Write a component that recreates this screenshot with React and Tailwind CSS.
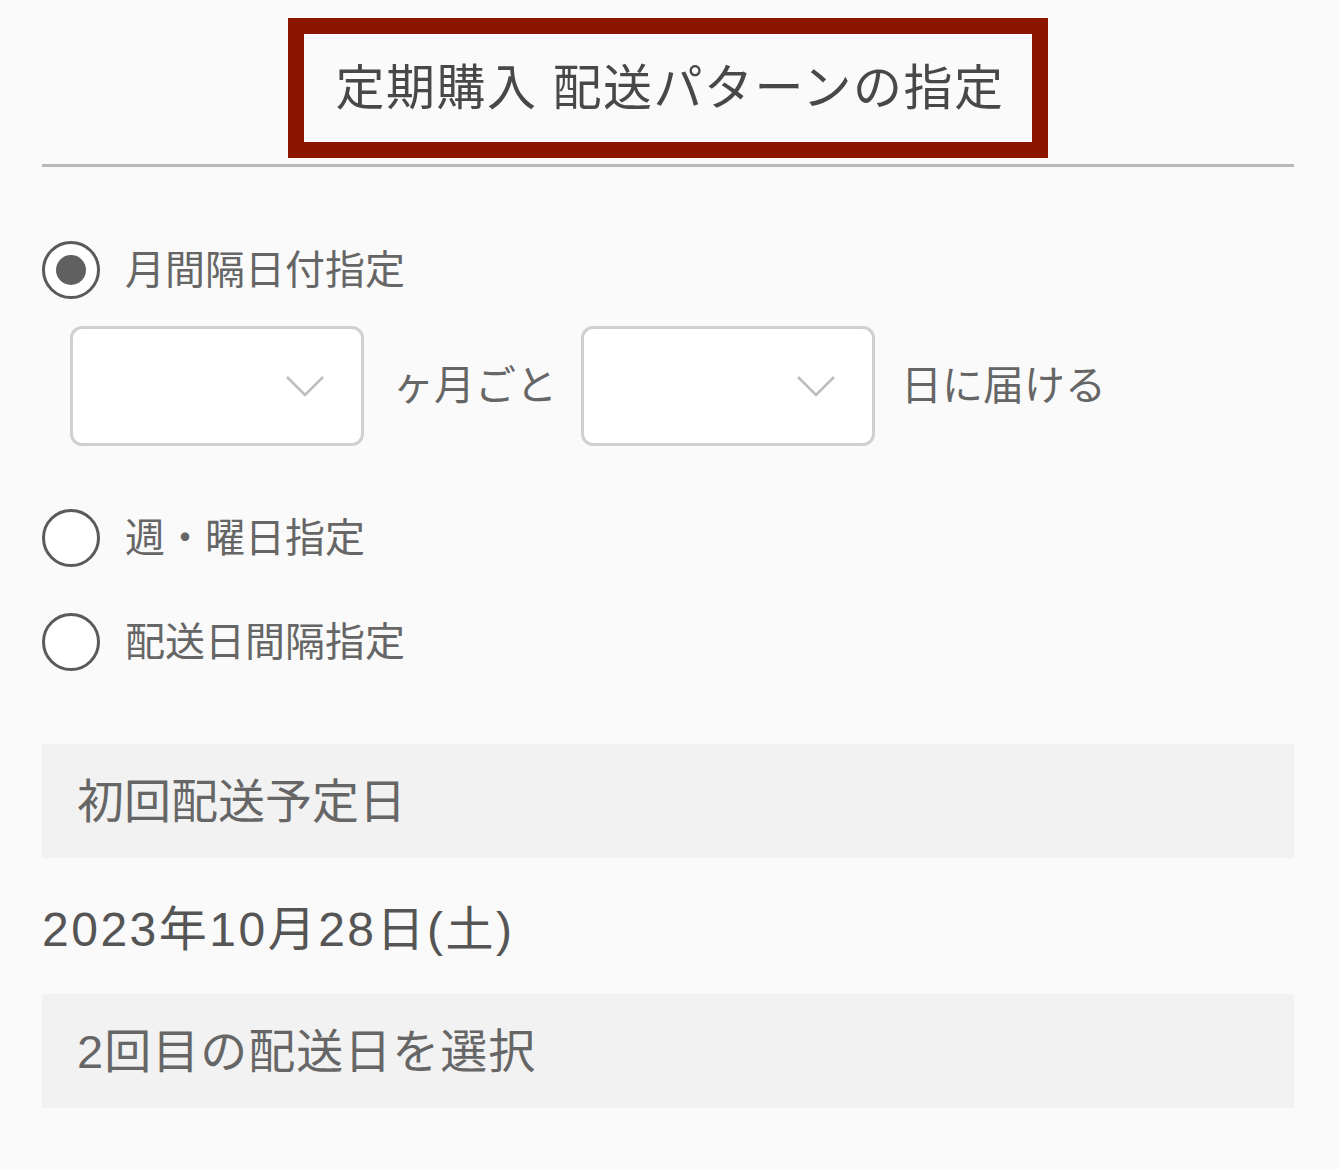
import React from 'react';

const font = { fontFamily: '"Liberation Sans", "Noto Sans CJK JP", sans-serif' };

function Radio({ checked, label }) {
  return (
    <div className="flex items-center h-[58px]">
      <div className="w-[58px] h-[58px] rounded-full border-[3px] border-[#5a5a5a] bg-white flex items-center justify-center shrink-0">
        {checked && <div className="w-[30px] h-[30px] rounded-full bg-[#606060]" />}
      </div>
      <span className="ml-[25px] text-[40px] leading-none text-[#666]">{label}</span>
    </div>
  );
}

function Select() {
  return (
    <div className="w-[294px] h-[120px] rounded-[12px] border-[3px] border-[#d0d0d0] bg-white flex items-center justify-end pr-[36px]">
      <svg width="40" height="24" viewBox="0 0 40 24" fill="none">
        <path d="M2 3 L20 21 L38 3" stroke="#bdbdbd" strokeWidth="2.5" />
      </svg>
    </div>
  );
}

export default function App() {
  return (
    <div className="min-h-[1169px] bg-[#fafafa] pl-[42px] pr-[46px] pt-[18px]" style={font}>
      <div className="mx-auto w-[760px] h-[140px] border-[16px] border-[#8b1500] flex items-center justify-center">
        <h1 className="text-[49px] leading-none text-[#484848] font-normal tracking-[1.5px] pl-[4px]">定期購入 配送パターンの指定</h1>
      </div>
      <div className="mt-[6px] h-[3px] bg-[#b8b8b8]" />

      <div className="mt-[74px]">
        <Radio checked label="月間隔日付指定" />
      </div>
      <div className="mt-[27px] ml-[28px] flex items-center">
        <Select />
        <span className="ml-[29px] mr-[24px] text-[41px] leading-none text-[#666]">ヶ月ごと</span>
        <Select />
        <span className="ml-[26px] text-[41px] leading-none text-[#666]">日に届ける</span>
      </div>

      <div className="mt-[63px]">
        <Radio label="週・曜日指定" />
      </div>
      <div className="mt-[46px]">
        <Radio label="配送日間隔指定" />
      </div>

      <div className="mt-[73px] h-[114px] bg-[#f2f2f2] flex items-center pl-[35px]">
        <span className="text-[47px] leading-none text-[#666]">初回配送予定日</span>
      </div>
      <div className="mt-[42px] h-[94px] flex items-start pt-[6px]">
        <span className="text-[48px] leading-none text-[#555] tracking-[2.5px]">2023年10月28日(土)</span>
      </div>
      <div className="h-[114px] bg-[#f2f2f2] flex items-center pl-[35px]">
        <span className="text-[47px] leading-none text-[#666] tracking-[1px]">2回目の配送日を選択</span>
      </div>
    </div>
  );
}
